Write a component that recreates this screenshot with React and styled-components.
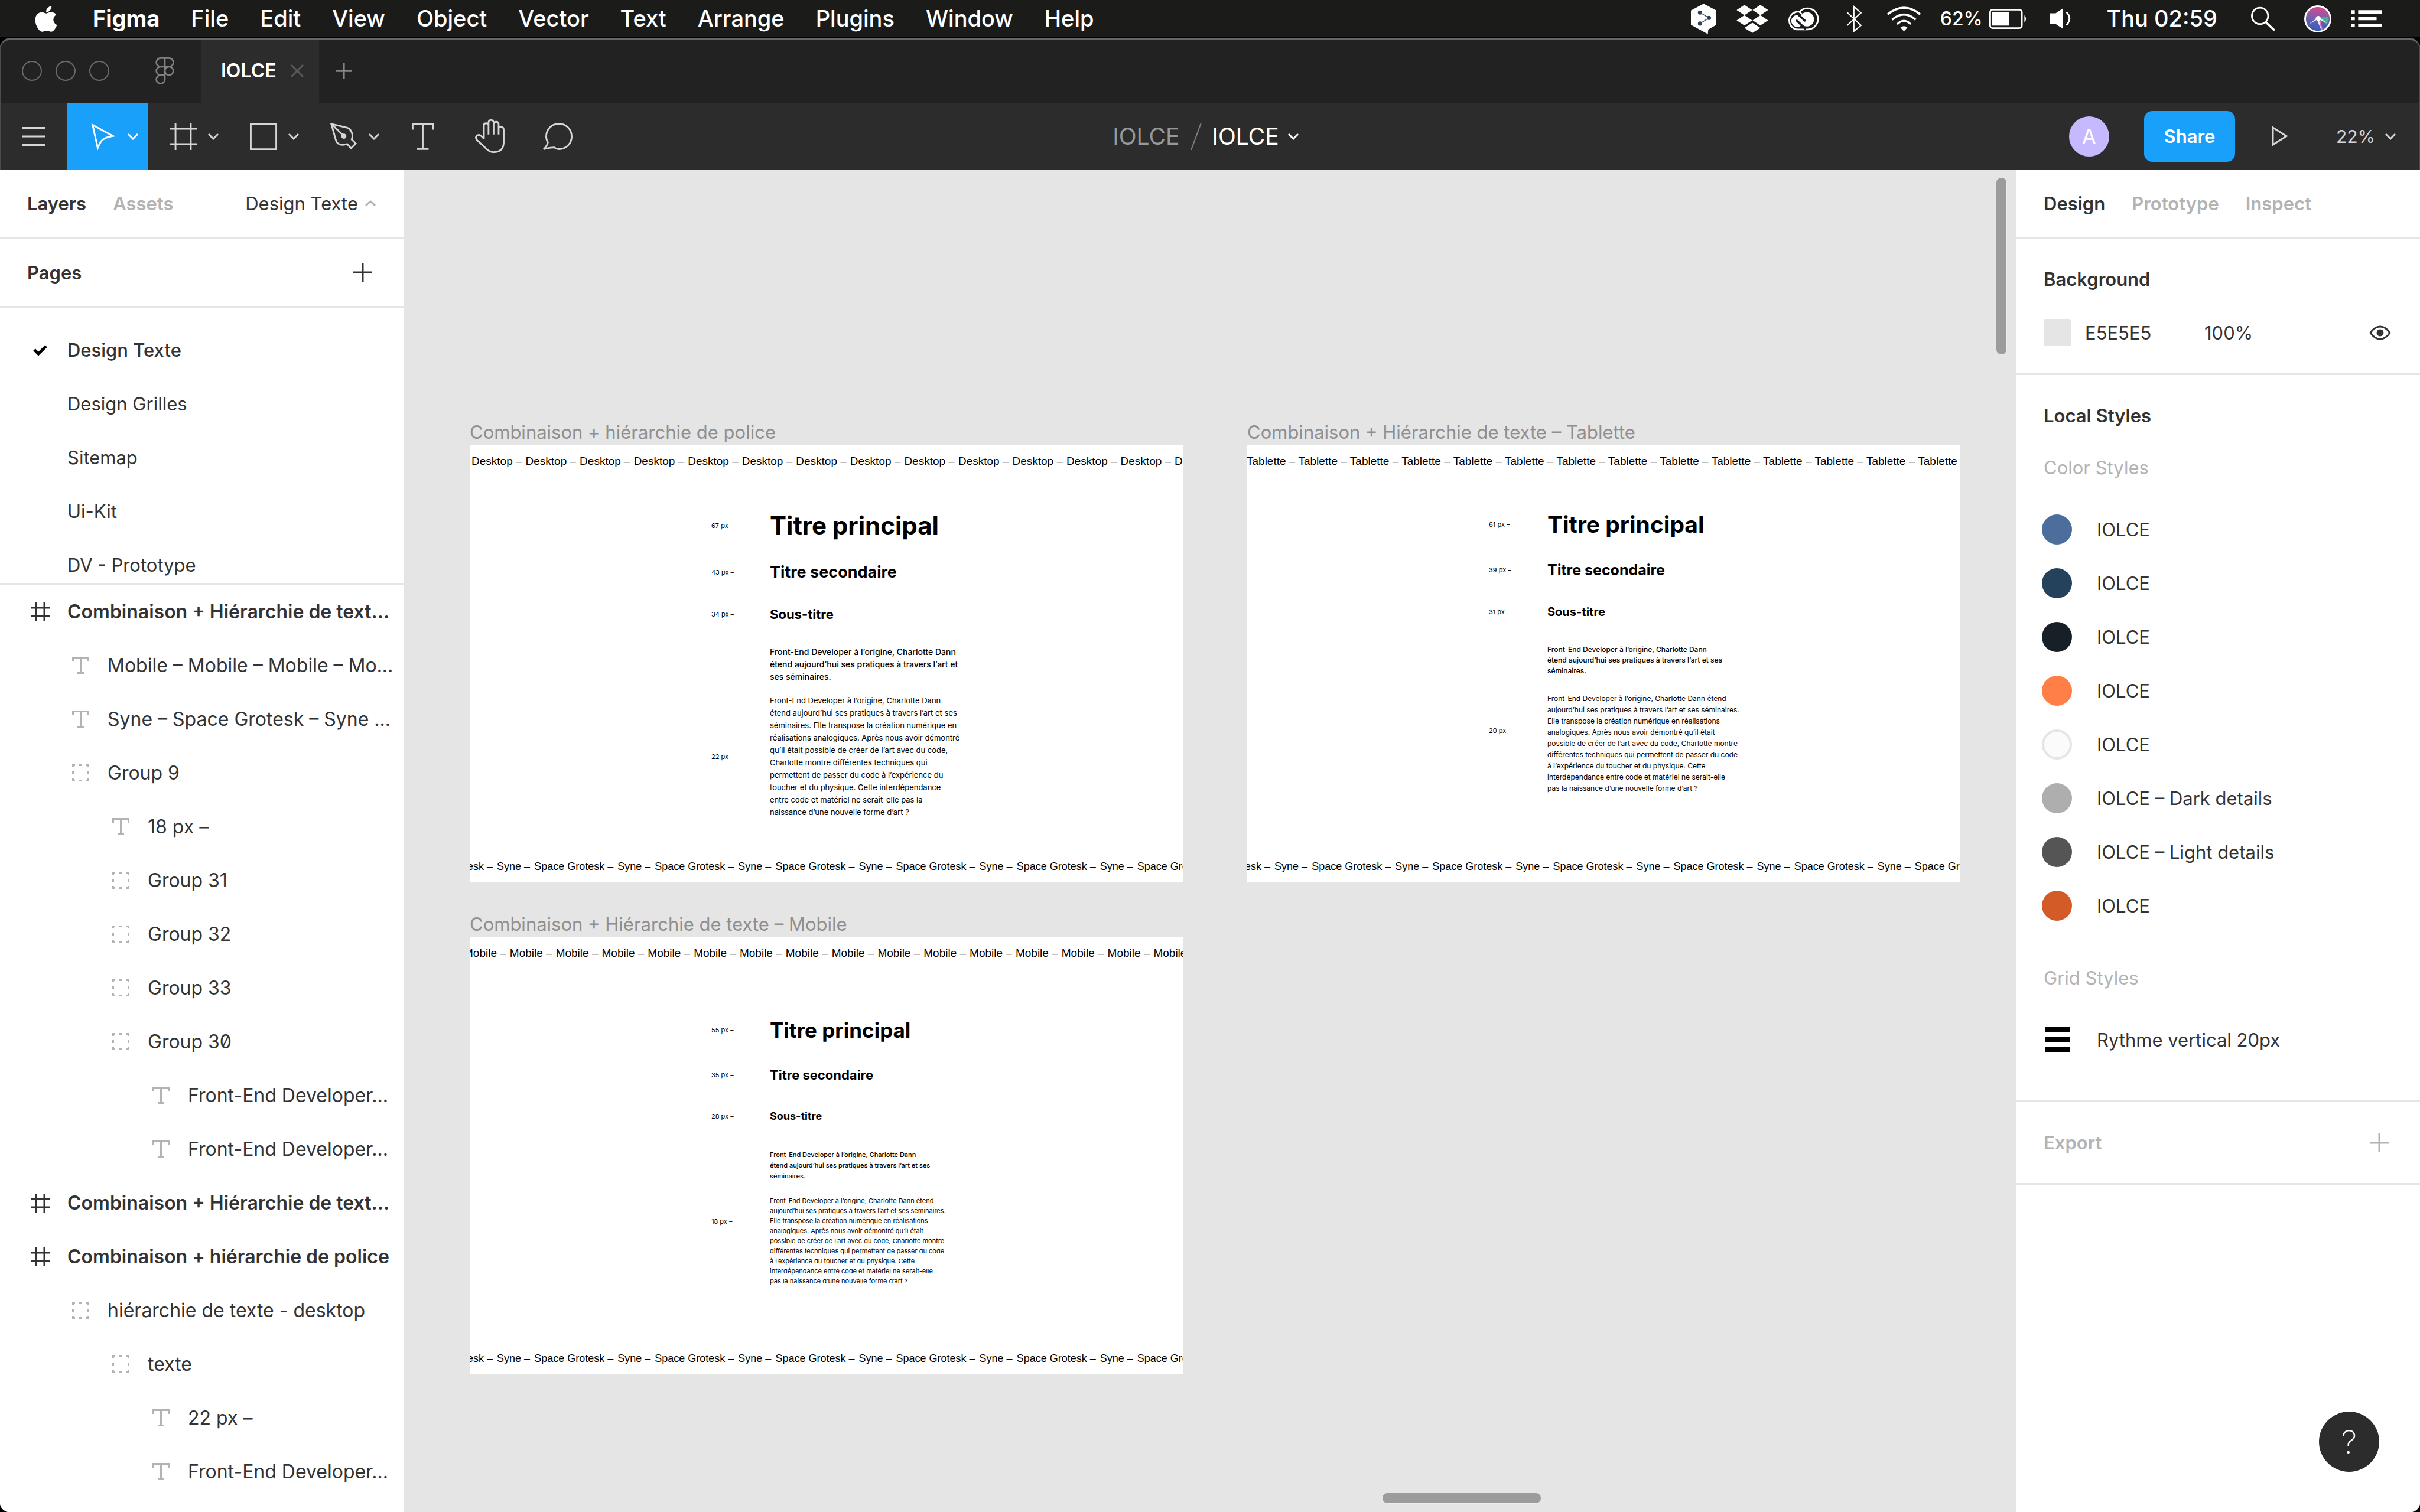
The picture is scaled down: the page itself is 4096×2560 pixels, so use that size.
import React from "react";
import styled, { createGlobalStyle, css } from "styled-components";
import { FaApple } from "react-icons/fa";

/* ---------- theme ---------- */

const ui = '"Inter", "Liberation Sans", sans-serif';
const grotesk = '"Liberation Sans", Arial, sans-serif';

const c = {
  ink: "#333333",
  faint: "#b3b3b3",
  line: "#e5e5e5",
  chrome: "#2c2c2c",
  chromeDark: "#222222",
  chromeIcon: "#d6d6d6",
  blue: "#18a0fb",
};

const Global = createGlobalStyle`
  * { box-sizing: border-box; }
  body { margin: 0; background: #000; font-family: ${ui}; }
  button, input { font: inherit; color: inherit; border: 0; padding: 0; background: none; }
  h1, h2, h3, p, ul { margin: 0; padding: 0; font: inherit; list-style: none; }
  svg { display: block; flex: none; }
`;

const Screen = styled.div`
  display: flex;
  flex-direction: column;
  height: 100vh;
  overflow: hidden;
`;

/* ---------- system menu bar ---------- */

const MenuBar = styled.header`
  display: flex;
  justify-content: space-between;
  align-items: center;
  flex: none;
  height: 63px;
  margin-bottom: 2px;
  padding: 0 65px 0 59px;
  background: #1b1b1a;
  color: #fff;
  font-size: 38px;
  line-height: 63px;
`;

const Menus = styled.nav`
  display: flex;
  align-items: center;
  gap: 53px;
`;

const AppleButton = styled.button`
  display: flex;
  justify-content: center;
  width: 37px;
  margin-right: 8px;
`;

const MenuItem = styled.button`
  font-weight: ${(p) => (p.$strong ? 700 : 500)};
  white-space: nowrap;
`;

const Status = styled.div`
  display: flex;
  align-items: center;
  font-weight: 500;
`;

const StatusItem = styled.div`
  display: flex;
  align-items: center;
  gap: 12px;
  margin-left: ${(p) => p.$gap}px;
  font-size: ${(p) => (p.$small ? 32 : 38)}px;
  white-space: nowrap;
`;

/* ---------- window chrome ---------- */

const Window = styled.div`
  display: flex;
  flex-direction: column;
  flex: 1;
  min-height: 0;
  overflow: hidden;
  border-radius: 16px;
  background: #fff;
`;

const ChromeFrame = styled.div`
  position: relative;
  flex: none;
  &::after {
    content: "";
    position: absolute;
    inset: 0;
    border: 2px solid #4c4c4c;
    border-top: 3px solid #666;
    border-bottom: 0;
    border-radius: 16px 16px 0 0;
    pointer-events: none;
  }
`;

const TabBar = styled.div`
  display: flex;
  align-items: center;
  height: 109px;
  background: ${c.chromeDark};
`;

const Lights = styled.div`
  display: flex;
  gap: 23px;
  padding: 0 78px 0 37px;
`;

const Light = styled.button`
  width: 34px;
  height: 34px;
  border: 2px solid #6a6a6a;
  border-radius: 50%;
`;

const FileTab = styled.div`
  display: flex;
  align-items: center;
  justify-content: space-between;
  width: 199px;
  height: 109px;
  margin: 0 29px 0 46px;
  padding: 0 26px 0 33px;
  background: ${c.chrome};
  color: #fff;
  font-size: 32px;
  font-weight: 600;
`;

const ToolBar = styled.div`
  display: grid;
  grid-template-columns: 1fr auto 1fr;
  height: 113px;
  background: ${c.chrome};
  color: ${c.chromeIcon};
`;

const Tools = styled.div`
  display: flex;
`;

const Tool = styled.button`
  display: flex;
  align-items: center;
  justify-content: center;
  width: 114px;
  ${(p) =>
    p.$menu &&
    css`
      justify-content: flex-start;
      gap: 18px;
      width: 136px;
      padding-left: 37px;
    `}
  ${(p) =>
    p.$active &&
    css`
      background: ${c.blue};
      color: #fff;
    `}
`;

const Crumbs = styled.div`
  display: flex;
  align-items: center;
  gap: 18px;
  padding-right: 14px;
  font-size: 39px;
`;

const Crumb = styled.button`
  display: flex;
  align-items: center;
  gap: 14px;
  color: ${(p) => (p.$current ? "#fff" : "#989898")};
`;

const Actions = styled.div`
  display: flex;
  align-items: center;
  justify-content: flex-end;
  padding-right: 40px;
  font-size: 30px;
`;

const Avatar = styled.button`
  width: 68px;
  height: 68px;
  border-radius: 50%;
  background: #c7b9ff;
  color: #fff;
  font-size: 35px;
`;

const Share = styled.button`
  width: 154px;
  height: 86px;
  margin: 0 62px 0 59px;
  border-radius: 14px;
  background: ${c.blue};
  color: #fff;
  font-size: 31px;
  font-weight: 600;
`;

const ZoomLevel = styled.button`
  display: flex;
  align-items: center;
  gap: 16px;
  margin-left: 82px;
`;

/* ---------- panels ---------- */

const Body = styled.main`
  display: grid;
  grid-template-columns: 683px minmax(0, 1fr) 683px;
  flex: 1;
  min-height: 0;
  color: ${c.ink};
  font-size: 31px;
  line-height: 45px;
`;

const Panel = styled.aside`
  position: relative;
  display: flex;
  flex-direction: column;
  min-height: 0;
  overflow: hidden;
  background: #fff;
`;

const PanelRow = styled.div`
  display: flex;
  align-items: center;
  justify-content: space-between;
  flex: none;
  height: ${(p) => (p.$tall ? 140 : 117)}px;
  padding: 0 ${(p) => (p.$inset ? 53 : 46)}px 0 46px;
  border-bottom: 3px solid ${c.line};
`;

const TabGroup = styled.div`
  display: flex;
  gap: 45px;
`;

const PanelTab = styled.button`
  font-weight: 600;
  color: ${(p) => (p.$on ? c.ink : c.faint)};
`;

const PagePicker = styled.button`
  display: flex;
  align-items: center;
  gap: 11px;
`;

const Heading = styled.h2`
  font-weight: 600;
  color: ${(p) => (p.$muted ? c.faint : c.ink)};
`;

const IconButton = styled.button`
  display: flex;
  color: ${(p) => p.$tone || c.ink};
`;

const PageList = styled.ul`
  flex: none;
  height: 469px;
  padding-top: 26px;
  overflow: hidden;
  border-bottom: 3px solid ${c.line};
`;

const LayerList = styled.ul`
  flex: 1;
  min-height: 0;
  overflow: hidden;
  font-size: 32px;
`;

const Item = styled.li`
  padding-left: ${(p) => 52 + (p.$level || 0) * 68}px;
`;

const ItemButton = styled.button`
  display: flex;
  align-items: center;
  gap: 30px;
  width: 100%;
  height: 91px;
  color: ${(p) => (p.$tint ? c.faint : c.ink)};
  text-align: left;
`;

const ItemName = styled.span`
  color: ${c.ink};
  font-weight: ${(p) => p.$weight || 400};
  font-variant-numeric: slashed-zero;
  white-space: nowrap;
`;

const IconSlot = styled.span`
  display: flex;
  justify-content: center;
  flex: none;
  width: 32px;
`;

const Section = styled.section`
  display: flex;
  flex-direction: column;
  flex: none;
  padding: 46px 49px ${(p) => p.$foot}px 46px;
  border-bottom: 3px solid ${c.line};
`;

const FillRow = styled.div`
  display: grid;
  grid-template-columns: 46px 178px 1fr auto;
  align-items: center;
  column-gap: 24px;
  margin-top: 45px;
`;

const Swatch = styled.button`
  width: 46px;
  height: 46px;
  border-radius: 3px;
  background: #e5e5e5;
`;

const Field = styled.input`
  width: 100%;
  min-width: 0;
  outline: 0;
`;

const SubHeading = styled.h3`
  margin-top: ${(p) => p.$top}px;
  color: ${c.faint};
`;

const StyleList = styled.ul`
  margin: 37px 0 0 -3px;
`;

const StyleRow = styled.li`
  display: flex;
  align-items: center;
  gap: 42px;
  height: 91px;
`;

const Dot = styled.span`
  width: 51px;
  height: 51px;
  border-radius: 50%;
  border: ${(p) => (p.$ring ? "4px solid #e5e5e5" : "0")};
  background: ${(p) => p.$color};
`;

const GridGlyph = styled.span`
  display: flex;
  flex-direction: column;
  gap: 8px;
  width: 51px;
  padding: 0 3px 0 6px;
`;

const GridBar = styled.span`
  height: 9px;
  background: #000;
`;

const Help = styled.button`
  position: absolute;
  right: 69px;
  bottom: 68px;
  width: 102px;
  height: 102px;
  border-radius: 50%;
  background: ${c.chrome};
  color: #fff;
  font-size: 54px;
  font-weight: 200;
`;

/* ---------- canvas ---------- */

const Canvas = styled.section`
  position: relative;
  overflow: hidden;
  background: #e5e5e5;
`;

const Board = styled.article`
  position: absolute;
  left: ${(p) => p.$x}px;
  top: ${(p) => p.$y}px;
  width: 1207px;
`;

const BoardName = styled.h2`
  height: 45px;
  color: #8f8f8f;
  font-size: 31px;
  line-height: 45px;
  white-space: nowrap;
`;

const Sheet = styled.div`
  display: flex;
  flex-direction: column;
  height: 740px;
  overflow: hidden;
  background: #fff;
  color: #000;
`;

const Banner = styled.p`
  display: flex;
  gap: ${(p) => p.$gap}px;
  flex: none;
  margin-top: ${(p) => (p.$foot ? "auto" : "0")};
  margin-left: ${(p) => p.$start}px;
  font-family: ${grotesk};
  font-size: ${(p) => (p.$foot ? 18 : 19)}px;
  line-height: 54px;
  white-space: nowrap;
`;

const BannerWord = styled.span`
  flex: none;
`;

const Specimen = styled.div`
  display: grid;
  grid-template-columns: 99px 1fr;
  align-items: center;
  margin-top: ${(p) => p.$before}px;
  margin-left: 409px;
`;

const SizeTag = styled.span`
  padding-bottom: ${(p) => p.$lift || 0}px;
  font-size: 11px;
  line-height: 16px;
`;

const Sample = styled.p`
  grid-column: 2;
  font-size: ${(p) => p.$size}px;
  font-weight: ${(p) => p.$weight};
  line-height: ${(p) => p.$leading}px;
  white-space: nowrap;
`;

const Line = styled.span`
  display: block;
`;

const ScrollThumb = styled.div`
  position: absolute;
  border: 1px solid #eee;
  border-radius: 9px;
  background: #9c9c9c;
  ${(p) =>
    p.$vertical
      ? "top: 13px; right: 16px; width: 19px; height: 301px;"
      : "left: 1656px; bottom: 14px; width: 270px; height: 19px;"}
`;

/* ---------- icons ---------- */

const Svg = ({ w, h, box, sw = 4, children }) => (
  <svg width={w} height={h} viewBox={box} fill="none" stroke="currentColor" strokeWidth={sw} aria-hidden="true">
    {children}
  </svg>
);

const Chevron = ({ up }) => (
  <Svg w={20} h={12} box="0 0 20 12" sw={3}>
    <path d={up ? "M2 10L10 3L18 10" : "M2 2L10 10L18 2"} />
  </Svg>
);
const Plus = ({ size = 32, sw = 3 }) => (
  <Svg w={size} h={size} box="0 0 32 32" sw={sw}>
    <path d="M16 0V32M0 16H32" />
  </Svg>
);
const Burger = () => (
  <Svg w={40} h={32} box="0 0 40 32" sw={3}>
    <path d="M0 1.5H40M0 16H40M0 30.5H40" />
  </Svg>
);
const MoveIcon = () => (
  <Svg w={46} h={46} box="-6 -2 64 64">
    <path d="M2 3L50 29Q32 32 24 39Q18 46 14 57Z" />
  </Svg>
);
const FrameIcon = () => (
  <Svg w={46} h={46} box="0 0 64 64">
    <path d="M14 0V64M50 0V64M0 14H64M0 50H64" />
  </Svg>
);
const RectIcon = () => (
  <Svg w={46} h={46} box="0 0 64 64">
    <path d="M2 2H62V62H2Z" />
  </Svg>
);
const PenIcon = () => (
  <Svg w={46} h={46} box="0 0 64 64">
    <path d="M2.5 2.5L38 11C48 13 54 25 51.5 36L50.5 39L60 48.7L49 60L39.5 49.7C28 54 16 52 13 40Z" />
    <path d="M2 2L32 31" />
    <circle cx="32" cy="31.5" r="6" fill="currentColor" stroke="none" />
  </Svg>
);
const TextIcon = () => (
  <Svg w={37} h={46} box="0 0 52 64">
    <path d="M2 16V2H50V16M26 2V62M12 62H40" />
  </Svg>
);
const HandIcon = () => (
  <Svg w={50} h={57} box="0 0 70 80">
    <path d="M21 46V14Q21 9.500 26.500 9.500Q32 9.500 32 14M32 36V8Q32 2 38 2Q44 2 44 8V36M44 11Q45 6 50 6Q56 6 56 12V36M56 20Q59 17 63 18Q68 19 68 25V56Q67 78 44 78Q35 78 29 72L4 49Q0 43 4 39Q9 35 15 40L21 46" />
  </Svg>
);
const CommentIcon = () => (
  <Svg w={51} h={46} box="0 0 71 64">
    <path d="M3 62Q11 55 13 46Q9 40 9 32C9 15 22 2 39 2S69 15 69 32S56 62 39 62Q33 62 28 58Q18 58 3 62Z" />
  </Svg>
);
const FigmaMark = () => (
  <Svg w={32} h={46} box="4.300 1.300 15.400 22.400" sw={1.3}>
    <path d="M5 5.5A3.5 3.5 0 0 1 8.5 2H12V9H8.5A3.5 3.5 0 0 1 5 5.5ZM12 2H15.5A3.5 3.5 0 1 1 15.5 9H12ZM12 12.5A3.5 3.5 0 1 1 19 12.5A3.5 3.5 0 1 1 12 12.5ZM5 19.5A3.5 3.5 0 0 1 8.5 16H12V19.5A3.5 3.5 0 1 1 5 19.5ZM5 12.5A3.5 3.5 0 0 1 8.5 9H12V16H8.5A3.5 3.5 0 0 1 5 12.5Z" />
  </Svg>
);
const CloseIcon = () => (
  <Svg w={22} h={22} box="0 0 22 22" sw={3}>
    <path d="M1 1L21 21M21 1L1 21" />
  </Svg>
);
const PlayIcon = () => (
  <Svg w={27} h={35} box="0 0 27 35" sw={3}>
    <path d="M2 3V32L25 17.5Z" />
  </Svg>
);
const Slash = () => (
  <Svg w={19} h={46} box="0 0 19 46" sw={2}>
    <path d="M18 0L1 46" stroke="#808080" />
  </Svg>
);
const CheckIcon = () => (
  <Svg w={24} h={20} box="0 0 24 20" sw={5}>
    <path d="M2 9L9 16L22 3" stroke="#000" />
  </Svg>
);
const LayerIcons = {
  frame: () => (
    <Svg w={32} h={32} box="0 0 32 32" sw={3}>
      <path d="M9 0V32M23 0V32M0 9H32M0 23H32" />
    </Svg>
  ),
  text: () => (
    <Svg w={29} h={29} box="0 0 29 29" sw={3}>
      <path d="M1.5 8V1.5H27.5V8M14.5 1.5V27M9 27.5H20" />
    </Svg>
  ),
  group: () => (
    <Svg w={29} h={29} box="0 0 29 29" sw={3}>
      <path d="M1.5 5V1.5H5M24 1.5H27.5V5M27.5 24V27.5H24M5 27.5H1.5V24M12 1.5H17M12 27.5H17M1.5 12V17M27.5 12V17" />
    </Svg>
  ),
};
const EyeIcon = () => (
  <Svg w={37} h={25} box="0 0 37 25" sw={3}>
    <path d="M2 12.5Q9 2 18.5 2T35 12.5Q28 23 18.5 23T2 12.5Z" />
    <circle cx="18.5" cy="12.5" r="6" fill="currentColor" stroke="none" />
  </Svg>
);

const DeepL = () => (
  <Svg w={43} h={52} box="0 0 60 72" sw={2}>
    <path d="M30 0L60 16V50L41 61L40 72L0 50V16Z" fill="#fff" stroke="none" />
    <path d="M21.5 21L42.5 33.7L21.5 47" stroke="#2d4259" />
    <g fill="#2d4259" stroke="none">
      <circle cx="21.5" cy="21" r="5" />
      <circle cx="42.5" cy="33.700" r="5" />
      <circle cx="21.5" cy="47" r="5" />
    </g>
  </Svg>
);
const Dropbox = () => (
  <Svg w={54} h={48} box="0 0 76 67">
    <path
      d="M19 0L37.5 12.3L19 24.6L.5 12.3ZM57 0L75.5 12.3L57 24.6L38.5 12.3ZM19 24.6L37.5 36.9L19 49L.5 36.9ZM57 24.6L75.5 36.9L57 49L38.5 36.9ZM38 42.5L57 54.8L38 67L19 54.8Z"
      fill="#fff"
      stroke="none"
    />
  </Svg>
);
const CreativeCloud = () => (
  <Svg w={55} h={40} box="0 0 77 56">
    <path d="M24 53H49A25 25 0 1 0 31 11A21 21 0 1 0 24 53Z" />
    <circle cx="25" cy="33" r="14" fill="#fff" stroke="none" />
    <circle cx="48" cy="29" r="17" fill="#fff" stroke="none" />
    <path d="M28 18L43 32M24 32L44 51" stroke="#1b1b1a" strokeWidth="5" strokeLinecap="round" />
    <path d="M30 11L36 17" />
  </Svg>
);
const Bluetooth = () => (
  <Svg w={27} h={46} box="0 0 38 65" sw={3}>
    <path d="M2 17L35 48L18 62V3L35 18L2 48" />
  </Svg>
);
const Wifi = () => (
  <Svg w={59} h={42} box="0 0 83 60" sw={5}>
    <path d="M2 19Q41.5 -13 81 19M13 32Q41.5 7 70 32M25 43Q41.5 26 58 43" />
    <path d="M33 51Q41.5 44 50 51L41.5 60Z" fill="#fff" stroke="none" />
  </Svg>
);
const Battery = () => (
  <Svg w={65} h={34} box="0 0 92 48">
    <rect x="2" y="2" width="76" height="44" rx="6" />
    <rect x="7" y="8" width="40" height="32" fill="#fff" stroke="none" />
    <path d="M84 15Q92 24 84 33Z" fill="#fff" stroke="none" />
  </Svg>
);
const Speaker = () => (
  <Svg w={36} h={35} box="0 0 50 49">
    <path d="M2 12H14L32 0V49L14 37H2Q0 37 0 35V14Q0 12 2 12Z" fill="#fff" stroke="none" />
    <path d="M40 9Q54 24 40 40" />
  </Svg>
);
const Search = () => (
  <Svg w={42} h={42} box="0 0 58 58">
    <circle cx="21" cy="22" r="19" />
    <path d="M34 36L55 56" strokeWidth="5" />
  </Svg>
);
const Siri = () => (
  <Svg w={46} h={46} box="0 0 64 64">
    <defs>
      <linearGradient id="siri" x1="0.4" y1="0" x2="0.3" y2="1">
        <stop offset="0" stopColor="#e0468a" />
        <stop offset=".45" stopColor="#7a5fae" />
        <stop offset="1" stopColor="#2b5cb8" />
      </linearGradient>
    </defs>
    <circle cx="32" cy="32" r="30" fill="url(#siri)" stroke="#fff" />
    <path d="M34 30L57 26Q60 36 52 44Z" fill="#3fb58c" stroke="none" />
    <path d="M33 28L8 46L30 34L40 58L36 34L54 42L38 30Z" fill="#d8f3ff" stroke="none" />
    <path d="M36 34L42 58" stroke="#e77bc0" strokeWidth="3" />
    <circle cx="33" cy="31" r="6" fill="#fff" stroke="none" />
  </Svg>
);
const ListIcon = () => (
  <Svg w={51} h={29} box="0 0 72 40" sw={8}>
    <path d="M0 4H8M16 4H72M0 20H8M16 20H60M0 36H8M16 36H72" />
  </Svg>
);

/* ---------- data ---------- */

const menus = ["File", "Edit", "View", "Object", "Vector", "Text", "Arrange", "Plugins", "Window", "Help"];
const pages = ["Design Texte", "Design Grilles", "Sitemap", "Ui-Kit", "DV - Prototype"];

const layers = [
  [0, "frame", "Combinaison + Hiérarchie de text..."],
  [1, "text", "Mobile – Mobile – Mobile – Mo..."],
  [1, "text", "Syne – Space Grotesk – Syne ..."],
  [1, "group", "Group 9"],
  [2, "text", "18 px –"],
  [2, "group", "Group 31"],
  [2, "group", "Group 32"],
  [2, "group", "Group 33"],
  [2, "group", "Group 30"],
  [3, "text", "Front-End Developer..."],
  [3, "text", "Front-End Developer..."],
  [0, "frame", "Combinaison + Hiérarchie de text..."],
  [0, "frame", "Combinaison + hiérarchie de police"],
  [1, "group", "hiérarchie de texte - desktop"],
  [2, "group", "texte"],
  [3, "text", "22 px –"],
  [3, "text", "Front-End Developer..."],
];

const colorStyles = [
  ["#4b6e9c", "IOLCE"],
  ["#24425c", "IOLCE"],
  ["#182027", "IOLCE"],
  ["#ff7f47", "IOLCE"],
  ["#fbfbfb", "IOLCE", true],
  ["#aeaeae", "IOLCE – Dark details"],
  ["#555555", "IOLCE – Light details"],
  ["#d35b27", "IOLCE"],
];

const bodyNarrow = [
  "Front-End Developer à l’origine, Charlotte Dann étend",
  "aujourd’hui ses pratiques à travers l’art et ses séminaires.",
  "Elle transpose la création numérique en réalisations",
  "analogiques. Après nous avoir démontré qu’il était",
  "possible de créer de l’art avec du code, Charlotte montre",
  "différentes techniques qui permettent de passer du code",
  "à l’expérience du toucher et du physique. Cette",
  "interdépendance entre code et matériel ne serait-elle",
  "pas la naissance d’une nouvelle forme d’art ?",
];
const introNarrow = [
  "Front-End Developer à l’origine, Charlotte Dann",
  "étend aujourd’hui ses pratiques à travers l’art et ses",
  "séminaires.",
];

const boards = [
  {
    name: "Combinaison + hiérarchie de police",
    x: 112,
    y: 422,
    word: "Desktop –",
    count: 14,
    start: 3,
    gap: 6,
    rows: [
      { tag: "67 px –", before: 50, size: 42, leading: 64, weight: 700, lines: ["Titre principal"] },
      { tag: "43 px –", before: 27, size: 27, leading: 40, weight: 700, lines: ["Titre secondaire"] },
      { tag: "34 px –", before: 35, size: 22, leading: 32, weight: 700, lines: ["Sous-titre"] },
      {
        before: 37, size: 14, leading: 21, weight: 500,
        lines: ["Front-End Developer à l’origine, Charlotte Dann", "étend aujourd’hui ses pratiques à travers l’art et", "ses séminaires."],
      },
      {
        tag: "22 px –", before: 20, size: 13, leading: 21, weight: 400,
        lines: [
          "Front-End Developer à l’origine, Charlotte Dann",
          "étend aujourd’hui ses pratiques à travers l’art et ses",
          "séminaires. Elle transpose la création numérique en",
          "réalisations analogiques. Après nous avoir démontré",
          "qu’il était possible de créer de l’art avec du code,",
          "Charlotte montre différentes techniques qui",
          "permettent de passer du code à l’expérience du",
          "toucher et du physique. Cette interdépendance",
          "entre code et matériel ne serait-elle pas la",
          "naissance d’une nouvelle forme d’art ?",
        ],
      },
    ],
  },
  {
    name: "Combinaison + Hiérarchie de texte – Tablette",
    x: 1428,
    y: 422,
    word: "Tablette –",
    count: 14,
    start: -1,
    gap: 5,
    rows: [
      { tag: "61 px –", before: 48, size: 39, leading: 64, weight: 700, lines: ["Titre principal"] },
      { tag: "39 px –", before: 25, size: 25, leading: 40, weight: 700, lines: ["Titre secondaire"] },
      { tag: "31 px –", before: 35, size: 20, leading: 32, weight: 700, lines: ["Sous-titre"] },
      { before: 39, size: 12, leading: 18, weight: 500, lines: introNarrow },
      { tag: "20 px –", before: 28, size: 12, leading: 19, weight: 400, lift: 44, lines: bodyNarrow },
    ],
  },
  {
    name: "Combinaison + Hiérarchie de texte – Mobile",
    x: 112,
    y: 1255,
    word: "Mobile –",
    count: 16,
    start: -10,
    gap: 6,
    rows: [
      { tag: "55 px –", before: 71, size: 35, leading: 64, weight: 700, lines: ["Titre principal"] },
      { tag: "35 px –", before: 24, size: 22, leading: 40, weight: 700, lines: ["Titre secondaire"] },
      { tag: "28 px –", before: 34, size: 18, leading: 32, weight: 700, lines: ["Sous-titre"] },
      { before: 40, size: 11, leading: 18, weight: 500, lines: introNarrow },
      { tag: "18 px –", before: 25, size: 11, leading: 17, weight: 400, lift: 68, lines: bodyNarrow },
    ],
  },
];

const footWords = ["Space Grotesk –", ...Array.from({ length: 6 }, () => ["Syne –", "Space Grotesk –"]).flat()];

/* ---------- parts ---------- */

function SystemMenu() {
  return (
    <MenuBar>
      <Menus aria-label="Menu">
        <AppleButton aria-label="System"><FaApple size={50} /></AppleButton>
        <MenuItem $strong>Figma</MenuItem>
        {menus.map((m) => (
          <MenuItem key={m}>{m}</MenuItem>
        ))}
      </Menus>
      <Status>
        <StatusItem $gap={0}><DeepL /></StatusItem>
        <StatusItem $gap={34}><Dropbox /></StatusItem>
        <StatusItem $gap={31}><CreativeCloud /></StatusItem>
        <StatusItem $gap={46}><Bluetooth /></StatusItem>
        <StatusItem $gap={41}><Wifi /></StatusItem>
        <StatusItem $gap={32} $small>
          62% <Battery />
        </StatusItem>
        <StatusItem $gap={37}><Speaker /></StatusItem>
        <StatusItem $gap={60}>Thu 02:59</StatusItem>
        <StatusItem $gap={57}><Search /></StatusItem>
        <StatusItem $gap={48}><Siri /></StatusItem>
        <StatusItem $gap={34}><ListIcon /></StatusItem>
      </Status>
    </MenuBar>
  );
}

function Chrome() {
  return (
    <ChromeFrame>
      <TabBar>
        <Lights>
          <Light aria-label="Close window" />
          <Light aria-label="Minimise window" />
          <Light aria-label="Zoom window" />
        </Lights>
        <IconButton aria-label="Home" $tone="#808080"><FigmaMark /></IconButton>
        <FileTab>
          IOLCE
          <IconButton aria-label="Close tab" $tone="#5a5a5a"><CloseIcon /></IconButton>
        </FileTab>
        <IconButton aria-label="New tab" $tone="#858585"><Plus size={26} sw={4} /></IconButton>
      </TabBar>
      <ToolBar>
        <Tools>
          <Tool aria-label="Main menu"><Burger /></Tool>
          <Tool $menu $active aria-label="Move"><MoveIcon /><Chevron /></Tool>
          <Tool $menu aria-label="Frame"><FrameIcon /><Chevron /></Tool>
          <Tool $menu aria-label="Shape"><RectIcon /><Chevron /></Tool>
          <Tool $menu aria-label="Pen"><PenIcon /><Chevron /></Tool>
          <Tool aria-label="Text"><TextIcon /></Tool>
          <Tool aria-label="Hand"><HandIcon /></Tool>
          <Tool aria-label="Comment"><CommentIcon /></Tool>
        </Tools>
        <Crumbs>
          <Crumb>IOLCE</Crumb>
          <Slash />
          <Crumb $current>IOLCE <Chevron /></Crumb>
        </Crumbs>
        <Actions>
          <Avatar>A</Avatar>
          <Share>Share</Share>
          <IconButton aria-label="Present" $tone={c.chromeIcon}><PlayIcon /></IconButton>
          <ZoomLevel>22% <Chevron /></ZoomLevel>
        </Actions>
      </ToolBar>
    </ChromeFrame>
  );
}

function LeftPanel() {
  return (
    <Panel>
      <PanelRow>
        <TabGroup>
          <PanelTab $on>Layers</PanelTab>
          <PanelTab>Assets</PanelTab>
        </TabGroup>
        <PagePicker>
          Design Texte
          <IconButton as="span" $tone={c.faint}><Chevron up /></IconButton>
        </PagePicker>
      </PanelRow>
      <PanelRow $inset>
        <Heading>Pages</Heading>
        <IconButton aria-label="Add page"><Plus /></IconButton>
      </PanelRow>
      <PageList>
        {pages.map((name, i) => (
          <Item key={name}>
            <ItemButton>
              <IconSlot>{i === 0 && <CheckIcon />}</IconSlot>
              <ItemName $weight={i === 0 ? 500 : 400}>{name}</ItemName>
            </ItemButton>
          </Item>
        ))}
      </PageList>
      <LayerList>
        {layers.map(([level, kind, name], i) => {
          const Icon = LayerIcons[kind];
          return (
            <Item key={i} $level={level}>
              <ItemButton $tint={kind !== "frame"}>
                <IconSlot><Icon /></IconSlot>
                <ItemName $weight={kind === "frame" ? 600 : 400}>{name}</ItemName>
              </ItemButton>
            </Item>
          );
        })}
      </LayerList>
    </Panel>
  );
}

function Artboard({ board }) {
  return (
    <Board $x={board.x} $y={board.y}>
      <BoardName>{board.name}</BoardName>
      <Sheet>
        <Banner $gap={board.gap} $start={board.start}>
          {Array.from({ length: board.count }, (_, i) => (
            <BannerWord key={i}>{board.word}</BannerWord>
          ))}
        </Banner>
        {board.rows.map((row, i) => (
          <Specimen key={i} $before={row.before}>
            {row.tag && <SizeTag $lift={row.lift}>{row.tag}</SizeTag>}
            <Sample $size={row.size} $weight={row.weight} $leading={row.leading}>
              {row.lines.map((l) => (
                <Line key={l}>{l}</Line>
              ))}
            </Sample>
          </Specimen>
        ))}
        <Banner $foot $gap={7} $start={-95}>
          {footWords.map((w, i) => (
            <BannerWord key={i}>{w}</BannerWord>
          ))}
        </Banner>
      </Sheet>
    </Board>
  );
}

function RightPanel() {
  return (
    <Panel>
      <PanelRow>
        <TabGroup>
          <PanelTab $on>Design</PanelTab>
          <PanelTab>Prototype</PanelTab>
          <PanelTab>Inspect</PanelTab>
        </TabGroup>
      </PanelRow>
      <Section $foot={46}>
        <Heading>Background</Heading>
        <FillRow>
          <Swatch aria-label="Background colour" />
          <Field aria-label="Hex" defaultValue="E5E5E5" />
          <Field aria-label="Opacity" defaultValue="100%" />
          <IconButton aria-label="Toggle visibility"><EyeIcon /></IconButton>
        </FillRow>
      </Section>
      <Section $foot={57}>
        <Heading>Local Styles</Heading>
        <SubHeading $top={43}>Color Styles</SubHeading>
        <StyleList>
          {colorStyles.map(([color, name, ring], i) => (
            <StyleRow key={i}>
              <Dot $color={color} $ring={ring} />
              {name}
            </StyleRow>
          ))}
        </StyleList>
        <SubHeading $top={54}>Grid Styles</SubHeading>
        <StyleList>
          <StyleRow>
            <GridGlyph>
              <GridBar />
              <GridBar />
              <GridBar />
            </GridGlyph>
            Rythme vertical 20px
          </StyleRow>
        </StyleList>
      </Section>
      <PanelRow $tall $inset>
        <Heading $muted>Export</Heading>
        <IconButton $tone={c.faint} aria-label="Add export"><Plus /></IconButton>
      </PanelRow>
      <Help aria-label="Help">?</Help>
    </Panel>
  );
}

export default function App() {
  return (
    <Screen>
      <Global />
      <SystemMenu />
      <Window>
        <Chrome />
        <Body>
          <LeftPanel />
          <Canvas>
            {boards.map((b) => (
              <Artboard key={b.name} board={b} />
            ))}
            <ScrollThumb $vertical />
            <ScrollThumb />
          </Canvas>
          <RightPanel />
        </Body>
      </Window>
    </Screen>
  );
}
